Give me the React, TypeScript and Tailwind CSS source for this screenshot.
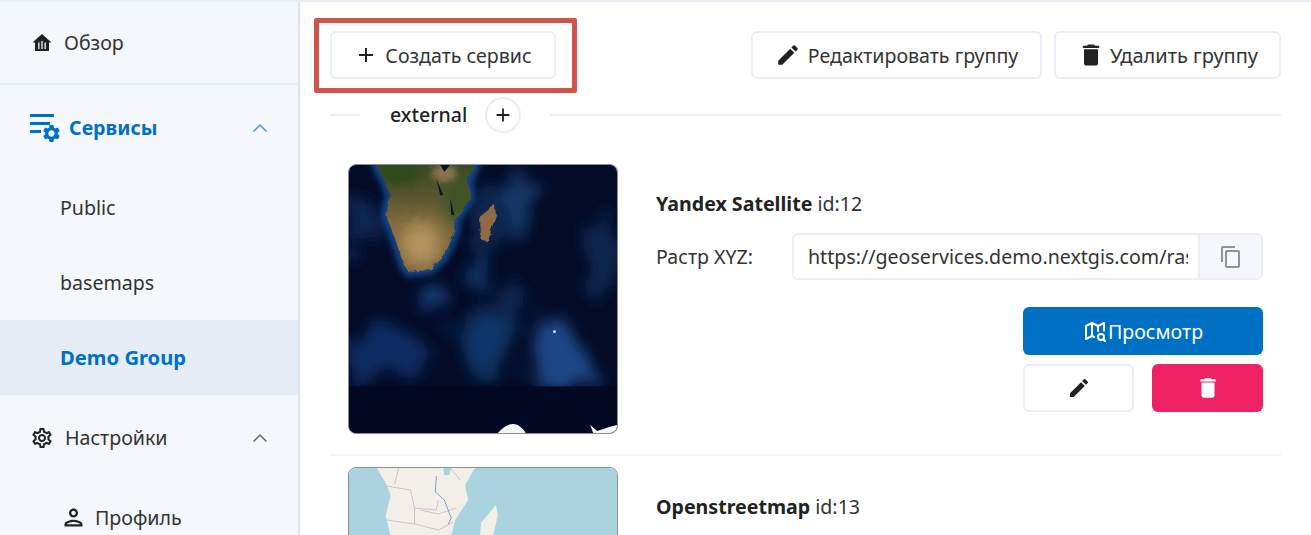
import type { ReactNode } from "react";
import { ChevronUp } from "lucide-react";
import {
  MdAdd,
  MdContentCopy,
  MdDelete,
  MdEdit,
  MdOutlinePerson,
  MdOutlineSettings,
  MdSettings,
} from "react-icons/md";
import { TbMapSearch } from "react-icons/tb";

function HomeIcon() {
  return (
    <svg viewBox="0 0 20 20" className="h-[20px] w-[20px] text-[#222]" fill="currentColor">
      <path d="M10 1 0.500 9.500H3V18h14V9.500h2.500L10 1Z" />
      <path d="M6.200 9.500h1.300V16H6.200zM9.350 8h1.300v8h-1.300zM12.500 9.500h1.300V16h-1.300z" fill="#f4f7fb" />
    </svg>
  );
}

function ServicesIcon() {
  return (
    <div className="relative h-[28px] w-[30px] shrink-0 text-[#0070c5]">
      <div className="absolute top-0 left-0 h-[3px] w-[24px] bg-current" />
      <div className="absolute top-[8px] left-0 h-[3px] w-[20px] bg-current" />
      <div className="absolute top-[16px] left-0 h-[3px] w-[11px] bg-current" />
      <MdSettings className="absolute top-[9px] left-[11px] h-[21px] w-[21px]" />
    </div>
  );
}

const AFRICA =
  "M28 0 37 18 42 30 37 50 45 70 55 100 60 108 82 105 95 93 107 67 107 55 122 33 120 17 127 0Z";

function SatelliteMap() {
  return (
    <svg viewBox="0 0 270 270" className="h-full w-full" preserveAspectRatio="none">
      <defs>
        <filter id="ocean" x="-30%" y="-30%" width="160%" height="160%">
          <feTurbulence type="fractalNoise" baseFrequency="0.04" numOctaves="4" seed="7" result="n" />
          <feDisplacementMap in="SourceGraphic" in2="n" scale="40" />
          <feGaussianBlur stdDeviation="7" />
        </filter>
        <filter id="coast" x="-30%" y="-30%" width="160%" height="160%">
          <feGaussianBlur stdDeviation="3.500" />
        </filter>
        <filter id="edge" x="-10%" y="-10%" width="120%" height="120%">
          <feTurbulence type="fractalNoise" baseFrequency="0.12" numOctaves="3" seed="3" result="n" />
          <feDisplacementMap in="SourceGraphic" in2="n" scale="5" />
          <feGaussianBlur stdDeviation="0.600" />
        </filter>
        <filter id="blur2" x="-40%" y="-40%" width="180%" height="180%">
          <feGaussianBlur stdDeviation="8" />
        </filter>
        <linearGradient id="land" x1="0" y1="0" x2="0" y2="1">
          <stop offset="0" stopColor="#364a22" />
          <stop offset="0.3" stopColor="#5a5530" />
          <stop offset="0.55" stopColor="#806a3c" />
          <stop offset="1" stopColor="#7d6039" />
        </linearGradient>
        <clipPath id="africa">
          <path d={AFRICA} />
        </clipPath>
      </defs>
      <rect width="270" height="270" fill="#030b26" />
      <g filter="url(#ocean)">
        <path d="M0 35 25 30 30 60 12 95 0 100Z" fill="#0c2655" />
        <path d="M0 170 40 160 85 185 70 205 20 215 0 225Z" fill="#0e2c60" />
        <path d="M120 40 160 10 170 40 150 85 125 90Z" fill="#0c2750" />
        <path d="M165 15 185 8 190 40 175 75 160 70Z" fill="#143868" />
        <path d="M125 95 145 85 142 125 125 130Z" fill="#113263" />
        <path d="M75 125 95 120 90 145 72 150Z" fill="#17407a" />
        <path d="M105 170 165 150 172 200 120 210Z" fill="#103468" />
        <path d="M110 150 170 115 185 140 125 165Z" fill="#0b2650" />
        <path d="M190 165 215 150 250 215 188 225Z" fill="#1a4786" />
        <path d="M235 60 265 40 268 110 245 140Z" fill="#0b264f" />
      </g>
      <path d={AFRICA} fill="none" stroke="#174f94" strokeWidth="9" filter="url(#coast)" />
      <rect y="223" width="270" height="47" fill="#020821" />
      <g filter="url(#edge)">
        <path d={AFRICA} fill="url(#land)" />
        <g clipPath="url(#africa)">
          <ellipse cx="72" cy="80" rx="20" ry="22" fill="#b3945f" filter="url(#blur2)" />
          <ellipse cx="110" cy="36" rx="14" ry="26" fill="#3c5228" filter="url(#blur2)" />
          <ellipse cx="96" cy="8" rx="12" ry="9" fill="#8a7450" filter="url(#coast)" />
          <ellipse cx="50" cy="8" rx="22" ry="12" fill="#33491f" filter="url(#coast)" />
        </g>
        <path d="M132 52 147 40 148 50 140 77 133 75Z" fill="#8f6a45" />
      </g>
      <path d="M92 0 102 0 96 7ZM88 14 95 30 92 31ZM102 33 106 50 103 50Z" fill="#0d1426" />
      <circle cx="207" cy="168" r="1.500" fill="#dce8f5" />
      <path d="M150 270Q160 258 170 262 176 266 178 270Z" fill="#f4f6f8" />
      <path d="M243 262 250 268 262 264 270 262V270H246Z" fill="#f4f6f8" />
    </svg>
  );
}

function StreetMap() {
  return (
    <svg viewBox="0 0 270 68" className="h-[68px] w-full" preserveAspectRatio="none">
      <rect width="270" height="68" fill="#aad3df" />
      <path d="M28 0 37 15 42 27 37 48 42 68H103L107 52 120 32 117 17 127 0Z" fill="#f2efe9" />
      <path d="M148 37 133 55 132 68H145L150 47Z" fill="#f2efe9" />
      <path
        d="M38 18 62 22 66 40 88 42 90 32M66 40V56L38 52M66 56 90 62 105 54M72 42 90 46 108 40M50 0 46 16M112 12 102 0"
        fill="none"
        stroke="#d3bdcf"
        strokeWidth="1"
      />
      <path d="M88 8 87 24 96 32 103 50 100 56" fill="none" stroke="#7d9fc4" strokeWidth="1" />
      <path d="M95 0H103L101 7H96Z" fill="#aad3df" />
    </svg>
  );
}

function NavChild({ label, active }: { label: string; active?: boolean }) {
  return (
    <div
      className={`flex h-[75px] items-center pl-[60px] ${
        active ? "bg-[#e5ecf6] text-[20.2px] font-bold text-[#0070c5]" : "text-[#333]"
      }`}
    >
      {label}
    </div>
  );
}

function Sidebar() {
  return (
    <aside className="h-full w-[300px] shrink-0 border-r-2 border-[#d9e2ef] bg-[#f4f7fb]">
      <div className="flex h-[83px] items-center gap-[12px] border-b-2 border-[#e6edf6] pl-[32px] text-[#333]">
        <HomeIcon />
        <span>Обзор</span>
      </div>
      <div className="flex h-[85px] items-center pr-[26px] pl-[30px] font-bold text-[#0070c5]">
        <ServicesIcon />
        <span className="ml-[9px]">Сервисы</span>
        <ChevronUp className="ml-auto h-6 w-6 text-[#4d94d2]" strokeWidth={1.500} />
      </div>
      <NavChild label="Public" />
      <NavChild label="basemaps" />
      <NavChild active label="Demo Group" />
      <div className="flex h-[85px] items-center gap-[11px] pr-[26px] pl-[30px] text-[#333]">
        <MdOutlineSettings className="h-[24px] w-[24px] text-[#222]" />
        <span>Настройки</span>
        <ChevronUp className="ml-auto h-6 w-6 text-[#666]" strokeWidth={1.500} />
      </div>
      <div className="flex h-[75px] items-center gap-[8px] pl-[60px] text-[#333]">
        <MdOutlinePerson className="h-[27px] w-[27px] text-[#222]" />
        <span>Профиль</span>
      </div>
    </aside>
  );
}

function ServiceCard({
  name,
  id,
  map,
  children,
}: {
  name: string;
  id: number;
  map: ReactNode;
  children?: ReactNode;
}) {
  return (
    <div className="flex gap-[38px] pl-[18px]">
      <div className="h-[270px] w-[270px] shrink-0 overflow-hidden rounded-[8px] border border-[#8a8f96]">
        {map}
      </div>
      <div className="min-w-0 flex-1 pt-[26px] pr-[18px]">
        <div className="leading-[28px]">
          <span className="font-bold text-[#222]">{name}</span> <span className="text-[#333]">id:{id}</span>
        </div>
        {children}
      </div>
    </div>
  );
}

export default function App() {
  return (
    <div
      className="flex h-[535px] w-[1311px] overflow-hidden border-t-2 border-[#e8eef6] bg-white text-[19.6px] text-[#333]"
      style={{ fontFamily: '"Noto Sans", sans-serif' }}
    >
      <Sidebar />
      <main className="relative flex-1 overflow-hidden pt-[29px] pr-[30px] pl-[30px]">
        <div className="flex items-center gap-[12px]">
          <button className="mr-auto flex h-[48px] w-[226px] items-center justify-center gap-[7px] rounded-[6px] border-2 border-[#eceef5]">
            <MdAdd className="h-[24px] w-[24px] text-[#222]" />
            <span className="pt-[1px]">Создать сервис</span>
          </button>
          <button className="flex h-[48px] w-[291px] items-center justify-center gap-[7px] rounded-[6px] border-2 border-[#eceef5]">
            <MdEdit className="h-[26px] w-[26px] text-[#222]" />
            <span className="pt-[1px]">Редактировать группу</span>
          </button>
          <button className="flex h-[48px] w-[227px] items-center justify-center gap-[5px] rounded-[6px] border-2 border-[#eceef5] text-[20px]">
            <MdDelete className="h-[28px] w-[28px] text-[#222]" />
            <span className="pt-[1px]">Удалить группу</span>
          </button>
        </div>

        <div className="absolute top-[16px] left-[14px] h-[75px] w-[263px] rounded-[2px] border-[5px] border-[#d1534a]" />

        <div className="mt-[18px] flex h-[36px] items-center">
          <div className="h-[2px] w-[30px] bg-[#eeeff5]" />
          <span className="ml-[30px] w-[77px] font-medium whitespace-nowrap text-[#222]">external</span>
          <button className="ml-[18px] flex h-[36px] w-[36px] items-center justify-center rounded-full border-2 border-[#eceef5]">
            <MdAdd className="h-[22px] w-[22px] text-[#222]" />
          </button>
          <div className="ml-[29px] h-[2px] flex-1 bg-[#eeeff5]" />
        </div>

        <div className="mt-[31px] border-b-2 border-[#f3f3f8] pb-[20px]">
          <ServiceCard name="Yandex Satellite" id={12} map={<SatelliteMap />}>
            <div className="mt-[15px] flex items-center">
              <span className="w-[136px] shrink-0 pt-[1px]">Растр XYZ:</span>
              <div className="flex h-[47px] min-w-0 flex-1 overflow-hidden rounded-[6px] border-2 border-[#eceef5]">
                <input
                  readOnly
                  value="https://geoservices.demo.nextgis.com/raster/12"
                  className="mr-[10px] min-w-0 flex-1 bg-white pt-[1px] pl-[14px] outline-none"
                />
                <div className="flex w-[63px] shrink-0 items-center justify-center border-l-2 border-[#eceef5] bg-[#f4f6fb]">
                  <MdContentCopy className="h-[24px] w-[24px] text-[#8e9299]" />
                </div>
              </div>
            </div>
            <div className="mt-[27px] ml-auto flex w-[240px] flex-col gap-[9px]">
              <button className="flex h-[48px] items-center justify-center gap-[1px] rounded-[6px] bg-[#0070c5] text-white">
                <TbMapSearch className="h-[24px] w-[24px]" />
                <span className="pt-[1px]">Просмотр</span>
              </button>
              <div className="flex justify-between">
                <button className="flex h-[48px] w-[111px] items-center justify-center rounded-[6px] border-2 border-[#eceef5]">
                  <MdEdit className="h-[24px] w-[24px] text-[#222]" />
                </button>
                <button className="flex h-[48px] w-[111px] items-center justify-center rounded-[6px] bg-[#ee2265]">
                  <MdDelete className="h-[26px] w-[26px] text-white" />
                </button>
              </div>
            </div>
          </ServiceCard>
        </div>

        <div className="mt-[11px]">
          <ServiceCard name="Openstreetmap" id={13} map={<StreetMap />} />
        </div>
      </main>
    </div>
  );
}
